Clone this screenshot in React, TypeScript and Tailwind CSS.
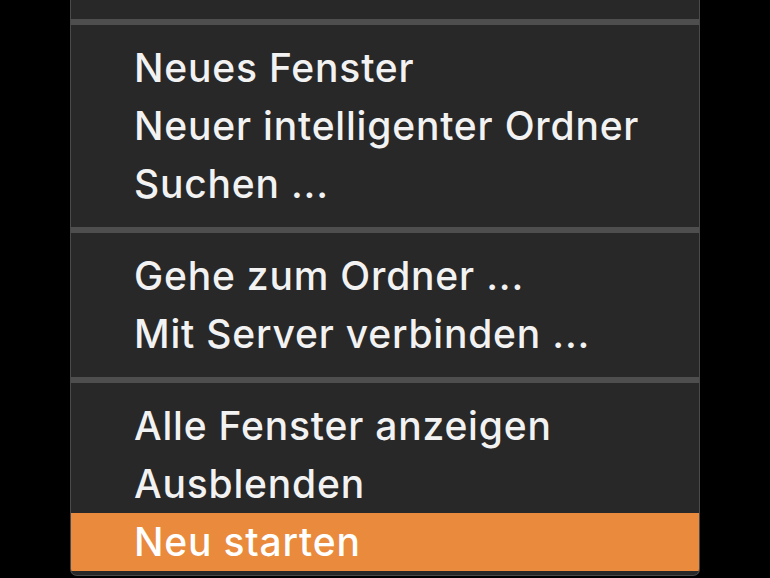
const groups: { label: string; active?: boolean }[][] = [
  [{ label: "Neues Fenster" }, { label: "Neuer intelligenter Ordner" }, { label: "Suchen ..." }],
  [{ label: "Gehe zum Ordner ..." }, { label: "Mit Server verbinden ..." }],
  [{ label: "Alle Fenster anzeigen" }, { label: "Ausblenden" }, { label: "Neu starten", active: true }],
];

const MenuItem = ({ label, active }: { label: string; active?: boolean }) => (
  <div
    className={`h-[58px] flex items-center pl-[63px] text-[39px] font-medium tracking-[0.8px] ${
      active ? "bg-[#e98a3c] text-white" : "text-[#f2f2f2]"
    }`}
  >
    {label}
  </div>
);

export default function App() {
  return (
    <div
      className="w-[770px] h-[578px] bg-black overflow-hidden"
      style={{ fontFamily: "Inter, 'Liberation Sans', sans-serif" }}
    >
      <div className="ml-[70px] w-[630px] h-[576px] bg-[#282828] border-x border-b border-[#4a4a4a] rounded-b-[7px] overflow-hidden">
        <div className="h-[19px]" />
        {groups.map((items, i) => (
          <div key={i}>
            <div className="h-[6px] bg-[#4e4e4e]" />
            <div className="py-[14px]">
              {items.map((it) => (
                <MenuItem key={it.label} label={it.label} active={it.active} />
              ))}
            </div>
          </div>
        ))}
      </div>
    </div>
  );
}
